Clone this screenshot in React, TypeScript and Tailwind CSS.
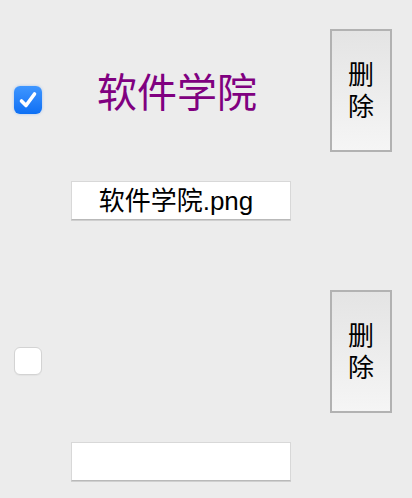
import { useState } from 'react';

type Item = { id: number; name: string; file: string; checked: boolean };

const font = { fontFamily: '"Liberation Sans", "Noto Sans CJK SC", sans-serif' };

function CheckBox({ checked, onChange }: { checked: boolean; onChange: () => void }) {
  if (checked) {
    return (
      <button
        onClick={onChange}
        className="flex h-[28px] w-[28px] items-center justify-center rounded-[6px] bg-gradient-to-b from-[#3e96ff] to-[#0b6ff4] shadow-[0_0_3px_rgba(30,120,245,0.35)]"
      >
        <svg width="22" height="22" viewBox="0 0 22 22" fill="none">
          <path d="M4.5 12 L9 16.5 L17.5 5" stroke="white" strokeWidth="3.6" strokeLinecap="round" strokeLinejoin="round" />
        </svg>
      </button>
    );
  }
  return (
    <button
      onClick={onChange}
      className="h-[28px] w-[28px] rounded-[6px] border border-[#d3d3d3] bg-white shadow-[0_1px_1px_rgba(0,0,0,0.04)]"
    />
  );
}

function Row({ item, onToggle }: { item: Item; onToggle: () => void }) {
  return (
    <div className="flex h-[261px] items-start">
      <div className="ml-[14px] mt-[86px]">
        <CheckBox checked={item.checked} onChange={onToggle} />
      </div>
      <div className="ml-[29px] flex w-[220px] flex-col">
        <div className="h-[181px] pl-[26px] pt-[72px]">
          <span className="text-[40px] leading-[42px] text-[#800080]" style={font}>
            {item.name}
          </span>
        </div>
        <input
          readOnly
          value={item.file}
          className="h-[39px] w-[220px] border border-[#d8d8d8] border-b-[#b9b9b9] bg-white pr-[10px] pt-[1px] text-center text-[26px] text-black shadow-[0_1px_0_#cfcfcf] outline-none"
          style={font}
        />
      </div>
      <button
        className="ml-[39px] mt-[29px] flex h-[123px] w-[62px] flex-col items-center justify-center border-2 border-[#b2b2b2] bg-gradient-to-b from-[#e4e4e4] to-[#f5f5f5] text-[26px] leading-[32px] text-black"
        style={font}
      >
        <span>删</span>
        <span>除</span>
      </button>
    </div>
  );
}

export default function App() {
  const [items, setItems] = useState<Item[]>([
    { id: 1, name: '软件学院', file: '软件学院.png', checked: true },
    { id: 2, name: '', file: '', checked: false },
  ]);

  const toggle = (id: number) =>
    setItems(items.map((it) => (it.id === id ? { ...it, checked: !it.checked } : it)));

  return (
    <div className="h-[498px] w-[412px] overflow-hidden bg-[#ececec]">
      {items.map((it) => (
        <Row key={it.id} item={it} onToggle={() => toggle(it.id)} />
      ))}
    </div>
  );
}
